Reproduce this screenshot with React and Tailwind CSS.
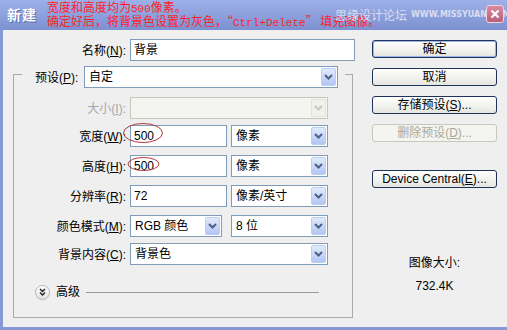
import React from "react";

const UI = "font-['Liberation_Sans','Noto_Sans_CJK_SC',sans-serif]";

function Chevron({ color = "#4d6185" }) {
  return (
    <svg width="9" height="6" viewBox="0 0 9 6" aria-hidden="true">
      <path d="M1 1 L4.5 4.5 L8 1" fill="none" stroke={color} strokeWidth="2" />
    </svg>
  );
}

// dropdown in the XP look: white field + light blue arrow button
function Select({ className, text, disabled }) {
  return (
    <div className={`h-[22px] flex items-center border ${disabled ? "border-[#c9c7ba] bg-[#f4f4f0]" : "border-[#7f9db9] bg-white"} ${className}`}>
      <span className="flex-1 pl-[4px] text-[12px] text-black whitespace-nowrap">{text}</span>
      <div className={`w-[15px] h-[18px] mr-[1px] rounded-[2px] border flex items-center justify-center ${disabled ? "border-[#e3e3dc] bg-[#f1f1ec]" : "border-[#b9cdf7] bg-gradient-to-b from-[#e1eafd] to-[#b2c6f3]"}`}>
        <Chevron color={disabled ? "#c9c9c0" : "#4d6185"} />
      </div>
    </div>
  );
}

function Field({ className, text }) {
  return (
    <div className={`h-[22px] flex items-center border border-[#7f9db9] bg-white pl-[3px] text-[12px] ${className}`}>{text}</div>
  );
}

function Label({ children, k, gray, className = "" }) {
  return (
    <span className={`text-[12px] whitespace-nowrap ${gray ? "text-[#a7a7a7]" : "text-black"} ${className}`}>
      {children}(<span className="underline">{k}</span>):
    </span>
  );
}

function Row({ label, k, gray, mt, children }) {
  return (
    <div className={`flex items-center h-[22px] ${mt}`}>
      <div className="w-[112px] text-right"><Label k={k} gray={gray}>{label}</Label></div>
      <div className="ml-[4px] flex items-center gap-[4px]">{children}</div>
    </div>
  );
}

function Button({ children, disabled, primary, className = "" }) {
  return (
    <div className={`w-[125px] h-[18px] rounded-[3px] border flex items-center justify-center text-[12px] ${disabled ? "border-[#c9c7ba] text-[#aca899] bg-[#f4f4f0]" : "border-[#1f3358] text-black bg-gradient-to-b from-white to-[#e6e6e0]"} ${primary ? "ring-1 ring-inset ring-[#9ab6ea]" : ""} ${className}`}>
      {children}
    </div>
  );
}

export default function App() {
  return (
    <div className={`w-[507px] h-[330px] relative overflow-hidden bg-[#efefef] ${UI}`}>
      {/* title bar */}
      <div className="h-[30px] flex items-center bg-gradient-to-b from-[#9db0e8] to-[#7d91d1] relative">
        <span className="pl-[7px] text-[14px] font-bold text-white tracking-[1px] [text-shadow:1px_1px_0_#5a6da8]">新建</span>
        <div className="ml-[10px] text-[#ff1f2a] text-[12px] leading-[12px] whitespace-nowrap font-['Noto_Sans_CJK_SC',sans-serif]">
          <div>宽度和高度均为<span className="font-['Liberation_Mono',monospace] text-[11px]">500</span>像素。</div>
          <div>确定好后，将背景色设置为灰色，“<span className="font-['Liberation_Mono',monospace] text-[11px]">Ctrl+Delete</span>” 填充图像。</div>
        </div>
        <div className="absolute left-[335px] top-[6px] flex items-center gap-[4px] whitespace-nowrap text-[#dadef0]">
          <span className="text-[12px] leading-[18px] font-['Noto_Sans_CJK_SC',sans-serif]">思缘设计论坛</span>
          <span className="text-[8px] font-bold font-['DejaVu_Sans',sans-serif]">WWW.MISSYUAN.COM</span>
        </div>
        <div className="absolute left-[486px] top-[5px] w-[18px] h-[18px] rounded-[3px] border border-[#f2d2dc] bg-gradient-to-b from-[#d88aa0] to-[#b8607a] flex items-center justify-center">
          <svg width="10" height="10" viewBox="0 0 10 10" aria-hidden="true">
            <path d="M1.5 1.5 L8.5 8.5 M8.5 1.5 L1.5 8.5" stroke="white" strokeWidth="2.2" />
          </svg>
        </div>
      </div>

      {/* body */}
      <div className="h-[300px] flex border-l-[3px] border-b-[3px] border-[#8599d6]">
        <div className="w-[369px] flex flex-col">
          <div className="mt-[9px] flex items-center h-[22px]">
            <div className="w-[123px] text-right"><Label k="N">名称</Label></div>
            <Field className="ml-[4px] w-[225px]" text="背景" />
          </div>

          <div className="mt-[13px] ml-[10px] w-[340px] h-[244px] border border-[#a9a9a9] flex flex-col">
            <div className="-mt-[10px] ml-[8px] self-start flex items-center bg-[#efefef] pl-[13px] pr-[7px]">
              <div className="w-[45px]"><Label k="P">预设</Label></div>
              <Select className="ml-[4px] w-[254px]" text="自定" />
            </div>
            <Row label="大小" k="I" gray mt="mt-[8px]">
              <Select className="w-[198px]" text="" disabled />
            </Row>
            <Row label="宽度" k="W" mt="mt-[6px]">
              <Field className="w-[97px]" text="500" />
              <Select className="w-[97px]" text="像素" />
            </Row>
            <Row label="高度" k="H" mt="mt-[8px]">
              <Field className="w-[97px]" text="500" />
              <Select className="w-[97px]" text="像素" />
            </Row>
            <Row label="分辨率" k="R" mt="mt-[8px]">
              <Field className="w-[97px]" text="72" />
              <Select className="w-[97px]" text="像素/英寸" />
            </Row>
            <Row label="颜色模式" k="M" mt="mt-[8px]">
              <Select className="w-[92px]" text="RGB 颜色" />
              <Select className="ml-[5px] w-[97px]" text="8 位" />
            </Row>
            <Row label="背景内容" k="C" mt="mt-[6px]">
              <Select className="w-[198px]" text="背景色" />
            </Row>
            <div className="mt-[19px] h-[16px] flex items-center">
              <div className="ml-[21px] w-[15px] h-[15px] rounded-full border border-[#b4b4b4] bg-gradient-to-b from-white to-[#e2e2e2] flex items-center justify-center">
                <svg width="7" height="8" viewBox="0 0 7 8" aria-hidden="true">
                  <path d="M1 1 L3.5 3.5 L6 1 M1 4.5 L3.5 7 L6 4.5" fill="none" stroke="#222" strokeWidth="1.4" />
                </svg>
              </div>
              <span className="ml-[6px] text-[12px]">高级</span>
              <div className="ml-[6px] mr-[33px] flex-1 h-px bg-[#9a9a9a]" />
            </div>
          </div>
        </div>

        <div className="flex flex-col items-center pt-[10px]">
          <Button primary>确定</Button>
          <Button className="mt-[10px]">取消</Button>
          <Button className="mt-[10px]">存储预设(<span className="underline">S</span>)...</Button>
          <Button className="mt-[10px]" disabled>删除预设(<span className="underline">D</span>)...</Button>
          <Button className="mt-[28px]">Device Central(<span className="underline">E</span>)...</Button>
          <span className="mt-[68px] text-[12px] leading-[14px]">图像大小:</span>
          <span className="mt-[9px] text-[12px] leading-[14px]">732.4K</span>
        </div>
      </div>

      {/* red hand-drawn marks around the sizes */}
      <svg className="absolute left-0 top-0 pointer-events-none" width="507" height="330" aria-hidden="true">
        <ellipse cx="143" cy="133" rx="19.5" ry="9.5" fill="none" stroke="#b23a3a" strokeWidth="1" />
        <ellipse cx="143.5" cy="164" rx="15.5" ry="6.5" fill="none" stroke="#b23a3a" strokeWidth="1" />
      </svg>
    </div>
  );
}
